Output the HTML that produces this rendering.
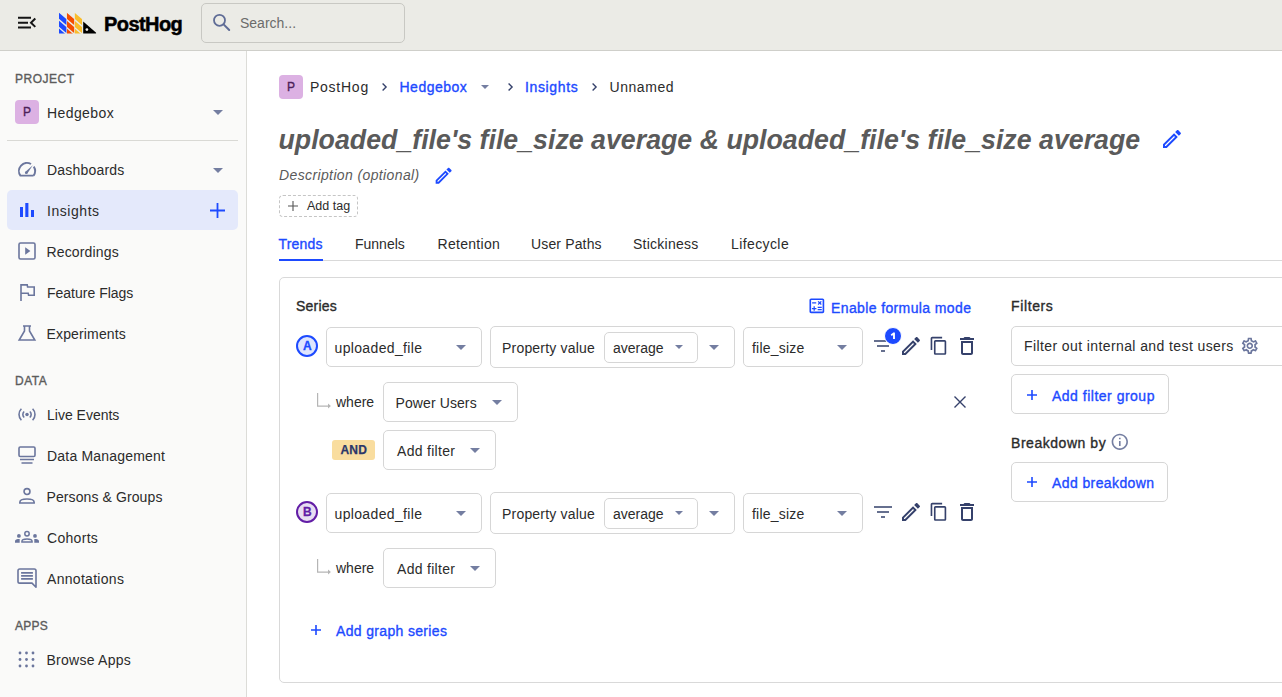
<!DOCTYPE html>
<html><head><meta charset="utf-8">
<style>
*{box-sizing:border-box;margin:0;padding:0}
html,body{width:1282px;height:697px;overflow:hidden;background:#fff;font-family:"Liberation Sans",sans-serif;color:#2b2b2b}
.a{position:absolute}
.t{position:absolute;white-space:nowrap;font-size:14px;line-height:14px}
#hdr{position:absolute;left:0;top:0;width:1282px;height:51px;background:#ebebe6;border-bottom:1px solid #cfcfca}
#side{position:absolute;left:0;top:51px;width:247px;height:646px;background:#fafaf9;border-right:1px solid #dcdcd8}
.sec{position:absolute;white-space:nowrap;font-size:12px;line-height:12px;color:#5c5c5c;-webkit-text-stroke:0.35px currentColor}
.box{position:absolute;border:1px solid #d6d6d6;border-radius:5px;background:#fff}
.blue{color:#1d4aff}
.b{font-weight:700}
.sb{-webkit-text-stroke:0.35px currentColor}
svg{position:absolute;overflow:visible}
.car{position:absolute;width:0;height:0;border-left:5px solid transparent;border-right:5px solid transparent;border-top:5px solid #747ea1}
.ic{fill:none;stroke:#6b769d;stroke-width:1.6}
.dk{fill:none;stroke:#35416b;stroke-width:1.8}
</style></head><body>

<!-- HEADER -->
<div id="hdr"></div>
<svg style="left:15px;top:11px" width="24" height="24" viewBox="0 0 24 24"><path d="M3 18h13v-2H3v2zm0-5h10v-2H3v2zm0-7v2h13V6H3zm18 9.59L17.42 12 21 8.41 19.59 7l-5 5 5 5L21 15.59z" fill="#151515" transform="translate(0 -0.1) scale(1 0.98)"/></svg>
<svg style="left:0;top:0" width="100" height="40" viewBox="0 0 100 40"><clipPath id="lc0"><rect x="59.0" y="12.8" width="7.6" height="20.8"/></clipPath><path clip-path="url(#lc0)" fill="#1d4aff" d="M59.00 12.80 L66.60 19.26 L66.60 25.26 L59.00 18.80Z M59.00 20.70 L66.60 27.16 L66.60 33.16 L59.00 26.70Z M59.00 28.60 L66.60 35.06 L66.60 41.06 L59.00 34.60Z M59.00 36.50 L66.60 42.96 L66.60 48.96 L59.00 42.50Z"/><clipPath id="lc1"><rect x="66.8" y="12.8" width="7.6" height="20.8"/></clipPath><path clip-path="url(#lc1)" fill="#f54e00" d="M66.80 12.80 L74.40 19.26 L74.40 25.26 L66.80 18.80Z M66.80 20.70 L74.40 27.16 L74.40 33.16 L66.80 26.70Z M66.80 28.60 L74.40 35.06 L74.40 41.06 L66.80 34.60Z M66.80 36.50 L74.40 42.96 L74.40 48.96 L66.80 42.50Z"/><clipPath id="lc2"><rect x="74.6" y="12.8" width="7.6" height="20.8"/></clipPath><path clip-path="url(#lc2)" fill="#f9bd2b" d="M74.60 12.80 L82.20 19.26 L82.20 25.26 L74.60 18.80Z M74.60 20.70 L82.20 27.16 L82.20 33.16 L74.60 26.70Z M74.60 28.60 L82.20 35.06 L82.20 41.06 L74.60 34.60Z M74.60 36.50 L82.20 42.96 L82.20 48.96 L74.60 42.50Z"/><path d="M83.2 21.6V33.6H95Q97 33.6 95.6 32.2Z" fill="#000"/><circle cx="86.9" cy="29.6" r="1.35" fill="#ebebe6"/></svg>
<div class="t b" style="left:104px;top:14px;font-size:20px;line-height:20px;color:#000;-webkit-text-stroke:0.5px #000;letter-spacing:-0.57px">PostHog</div>
<div class="a" style="left:201px;top:3px;width:204px;height:40px;border:1px solid #c8c8c3;border-radius:5px;background:#ebebe6"></div>
<svg style="left:208px;top:10px" width="28" height="26" viewBox="208 10 28 26"><circle cx="219.5" cy="20.3" r="5.5" fill="none" stroke="#5f6c96" stroke-width="1.8"/><path d="M223.6 24.4L229.2 30" stroke="#5f6c96" stroke-width="2" stroke-linecap="round"/></svg>
<div class="t" style="left:240px;top:16px;color:#6b6b6b">Search...</div>

<!-- SIDEBAR -->
<div id="side"></div>
<div class="sec" style="left:15px;top:73px;letter-spacing:0.52px">PROJECT</div>
<div class="a" style="left:15px;top:100px;width:24px;height:24px;border-radius:4px;background:#dcb1e3"></div>
<div class="t sb" style="left:23px;top:106px;font-size:12px;line-height:12px;color:#4d2159">P</div>
<div class="t" style="left:47px;top:106px;letter-spacing:0.4px">Hedgebox</div>
<div class="car" style="left:213px;top:110px"></div>
<div class="a" style="left:7px;top:140px;width:231px;height:1px;background:#d9d9d5"></div>

<div class="t" style="left:47px;top:163px;letter-spacing:0.2px">Dashboards</div>
<div class="car" style="left:213px;top:168px"></div>
<div class="a" style="left:7px;top:190px;width:231px;height:40px;border-radius:5px;background:#e4e9fb"></div>
<div class="t" style="left:47px;top:204px;letter-spacing:0.55px">Insights</div>
<svg style="left:210px;top:203px" width="15" height="15" viewBox="0 0 15 15"><path d="M7.5 0V15M0 7.5H15" stroke="#1d4aff" stroke-width="1.8"/></svg>
<div class="t" style="left:46.5px;top:245px;letter-spacing:0.15px">Recordings</div>
<div class="t" style="left:47px;top:286px">Feature Flags</div>
<div class="t" style="left:46.5px;top:327px;letter-spacing:0.15px">Experiments</div>
<div class="sec" style="left:15px;top:375px;letter-spacing:0.5px">DATA</div>
<div class="t" style="left:47px;top:408px">Live Events</div>
<div class="t" style="left:47px;top:449px;letter-spacing:0.2px">Data Management</div>
<div class="t" style="left:46.5px;top:490px;letter-spacing:0.1px">Persons &amp; Groups</div>
<div class="t" style="left:47px;top:531px;letter-spacing:0.3px">Cohorts</div>
<div class="t" style="left:47px;top:572px;letter-spacing:0.3px">Annotations</div>
<div class="sec" style="left:15px;top:620px;letter-spacing:0.25px">APPS</div>
<div class="t" style="left:46.5px;top:653px;letter-spacing:0.25px">Browse Apps</div>


<!-- sidebar icons -->
<svg style="left:18px;top:162px" width="18" height="15" viewBox="0 0 18 15"><path d="M15.57 13.65L2.43 13.65A8.05 8.05 0 0 1 13.03 2.03M15.75 4.61A8.05 8.05 0 0 1 15.57 13.65" fill="none" stroke="#6b769d" stroke-width="1.9" stroke-linejoin="round"/><path d="M9.18 11.66L7.22 9.94L14.8 3.3Z" fill="#6b769d"/><circle cx="8.2" cy="10.8" r="1.3" fill="#6b769d"/></svg>
<svg style="left:20px;top:203px" width="14" height="14" viewBox="0 0 14 14"><path d="M0 4H3V14H0ZM5.3 0H8.4V14H5.3ZM11 7H14V14H11Z" fill="#1d4aff"/></svg>
<svg style="left:18px;top:242px" width="18" height="18" viewBox="0 0 18 18"><rect x="1" y="1" width="16" height="16" rx="1.5" class="ic" stroke-width="2"/><path d="M7.2 5.3V12.7L12.4 9Z" fill="#6b769d"/></svg>
<svg style="left:20px;top:284px" width="16" height="17" viewBox="0 0 16 17"><path d="M1 17V0.9H7.2L7.6 3H14.2V11.2H8.6L8.2 9.2H1" class="ic" stroke-width="1.9"/></svg>
<svg style="left:18px;top:325px" width="18" height="16" viewBox="0 0 18 16"><path d="M5 1H13M6.5 1V6L1.2 15H16.8L11.5 6V1" class="ic" stroke-width="1.9" stroke-linejoin="miter"/></svg>
<svg style="left:18px;top:408px" width="19" height="13" viewBox="0 0 19 13"><circle cx="9" cy="6.5" r="1.75" fill="#6b769d"/><path d="M6.2 3.5A4 4 0 0 0 6.2 9.5M11.8 3.5A4 4 0 0 1 11.8 9.5M3.4 0.8A8 8 0 0 0 3.4 12.2M14.6 0.8A8 8 0 0 1 14.6 12.2" class="ic" stroke-width="1.8"/></svg>
<svg style="left:18px;top:446px" width="18" height="18" viewBox="0 0 18 18"><rect x="1" y="1" width="16" height="9.5" rx="1.2" class="ic" stroke-width="1.8"/><path d="M2 13.5H16M3.5 17H14.5" class="ic" stroke-width="1.8"/></svg>
<svg style="left:19px;top:489px" width="16" height="16" viewBox="0 0 16 16"><circle cx="8" cy="2.6" r="2.95" class="ic" stroke-width="1.7"/><path d="M0.85 14.05V13.2C0.85 11 4.5 10.05 8 10.05S15.15 11 15.15 13.2V14.05Z" class="ic" stroke-width="1.7"/></svg>
<svg style="left:15px;top:531px" width="24" height="12" viewBox="0 0 24 12"><circle cx="12" cy="2.7" r="2.2" fill="none" stroke="#6b769d" stroke-width="1.5"/><path d="M6.95 11V10.2C6.95 8.5 9.5 7.95 12 7.95S17.05 8.5 17.05 10.2V11Z" fill="none" stroke="#6b769d" stroke-width="1.5"/><circle cx="3.9" cy="4.9" r="1.9" fill="#6b769d"/><circle cx="20" cy="4.9" r="1.9" fill="#6b769d"/><path d="M0 11.7V10.4C0 9 1.3 8.1 3 8.1H4.7V11.7ZM24 11.7V10.4C24 9 22.7 8.1 21 8.1H19.3V11.7Z" fill="#6b769d"/></svg>
<svg style="left:17px;top:568px" width="20" height="20" viewBox="0 0 20 20"><path d="M2.7 1H17.3Q19 1 19 2.7V19.2L15 15.1H2.7Q1 15.1 1 13.4V2.7Q1 1 2.7 1Z" class="ic" stroke-width="1.8" stroke-linejoin="round"/><path d="M4.1 4.9H15.9M4.1 7.9H15.9M4.1 10.9H15.9" class="ic" stroke-width="1.7"/></svg>
<svg style="left:18px;top:651px" width="17" height="17" viewBox="0 0 17 17"><g fill="#6b769d"><circle cx="2" cy="2" r="1.4"/><circle cx="8.5" cy="2" r="1.4"/><circle cx="15" cy="2" r="1.4"/><circle cx="2" cy="8.5" r="1.4"/><circle cx="8.5" cy="8.5" r="1.4"/><circle cx="15" cy="8.5" r="1.4"/><circle cx="2" cy="15" r="1.4"/><circle cx="8.5" cy="15" r="1.4"/><circle cx="15" cy="15" r="1.4"/></g></svg>

<!-- MAIN -->
<div class="a" style="left:279px;top:75px;width:24px;height:24px;border-radius:4px;background:#dcb1e3"></div>
<div class="t sb" style="left:287px;top:81px;font-size:12px;line-height:12px;color:#4d2159">P</div>
<div class="t" style="left:310px;top:80px;letter-spacing:0.75px">PostHog</div>
<svg style="left:382px;top:83px" width="5" height="8" viewBox="0 0 5 8"><path d="M0.6 0.5L4.1 4L0.6 7.5" fill="none" stroke="#35416b" stroke-width="1.4"/></svg>
<div class="t blue sb" style="left:399.5px;top:80px;letter-spacing:0.49px">Hedgebox</div>
<div class="car" style="left:481px;top:85px;border-left-width:4px;border-right-width:4px;border-top-width:4px"></div>
<svg style="left:508px;top:83px" width="5" height="8" viewBox="0 0 5 8"><path d="M0.6 0.5L4.1 4L0.6 7.5" fill="none" stroke="#35416b" stroke-width="1.4"/></svg>
<div class="t blue sb" style="left:525px;top:80px;letter-spacing:0.64px">Insights</div>
<svg style="left:592px;top:83px" width="5" height="8" viewBox="0 0 5 8"><path d="M0.6 0.5L4.1 4L0.6 7.5" fill="none" stroke="#35416b" stroke-width="1.4"/></svg>
<div class="t" style="left:609.5px;top:80px;letter-spacing:0.55px">Unnamed</div>

<div class="t b" style="left:278.5px;top:127px;font-size:26.75px;line-height:27px;font-style:italic;color:#5a5a5a">uploaded_file's file_size average &amp; uploaded_file's file_size average</div>
<div class="t" style="left:279px;top:168px;font-style:italic;color:#5a5a5a;letter-spacing:0.38px">Description (optional)</div>
<svg style="left:1160px;top:127px" width="24" height="24" viewBox="0 0 24 24"><path d="M3 17.25V21h3.75L17.81 9.94l-3.75-3.75L3 17.25zM5.92 19H5v-.92l9.06-9.06.92.92L5.92 19zM20.71 5.63l-2.34-2.34c-.39-.39-1.02-.39-1.41 0l-1.83 1.83 3.75 3.75 1.83-1.83c.39-.39.39-1.02 0-1.41z" fill="#1d4aff"/></svg>
<svg style="left:432.5px;top:165px" width="21.3" height="21.3" viewBox="0 0 24 24"><path d="M3 17.25V21h3.75L17.81 9.94l-3.75-3.75L3 17.25zM5.92 19H5v-.92l9.06-9.06.92.92L5.92 19zM20.71 5.63l-2.34-2.34c-.39-.39-1.02-.39-1.41 0l-1.83 1.83 3.75 3.75 1.83-1.83c.39-.39.39-1.02 0-1.41z" fill="#1d4aff"/></svg>
<div class="a" style="left:279px;top:195px;width:79px;height:22px;border:1px dashed #c5c5c5;border-radius:4px"></div>
<svg style="left:288px;top:201px" width="10" height="10" viewBox="0 0 10 10"><path d="M5 0V10M0 5H10" stroke="#555" stroke-width="1.1"/></svg>
<div class="t" style="left:307px;top:200px;font-size:12.5px;line-height:13px">Add tag</div>

<!-- tabs -->
<div class="a" style="left:279px;top:260px;width:1003px;height:1px;background:#d9d9d9"></div>
<div class="a" style="left:279px;top:259px;width:44px;height:2px;background:#1d4aff"></div>
<div class="t blue sb" style="left:278.5px;top:237px;letter-spacing:0.2px">Trends</div>
<div class="t" style="left:355px;top:237px">Funnels</div>
<div class="t" style="left:437.5px;top:237px;letter-spacing:0.3px">Retention</div>
<div class="t" style="left:531px;top:237px;letter-spacing:0.15px">User Paths</div>
<div class="t" style="left:633px;top:237px;letter-spacing:0.25px">Stickiness</div>
<div class="t" style="left:731px;top:237px;letter-spacing:0.4px">Lifecycle</div>

<!-- card -->
<div class="a" style="left:279px;top:277px;width:1020px;height:406px;border:1px solid #d9d9d9;border-radius:5px"></div>
<div class="t sb" style="left:296px;top:299px;letter-spacing:0.2px">Series</div>
<svg style="left:806.9px;top:296.1px" width="19.7" height="19.7" viewBox="0 0 24 24"><path d="M19 3H5c-1.1 0-2 .9-2 2v14c0 1.1.9 2 2 2h14c1.1 0 2-.9 2-2V5c0-1.1-.9-2-2-2zm0 16H5V5h14v14zM6.25 7.72h5v1.5h-5zM13 15.75h5v1.5h-5zM13 13.25h5v1.5h-5zM8 18h1.5v-2h2v-1.5h-2v-2H8v2H6v1.5h2zM14.09 10.95l1.41-1.41 1.41 1.41 1.06-1.06-1.41-1.42 1.41-1.41L16.91 6 15.5 7.41 14.090 6l-1.06 1.06 1.41 1.41-1.41 1.42z" fill="#1d4aff"/></svg>
<div class="t sb blue" style="left:831px;top:301px;letter-spacing:0.38px">Enable formula mode</div>

<!-- series A -->
<div class="a" style="left:296px;top:335px;width:22px;height:22px;border-radius:50%;border:2px solid #1d4aff;background:#dfe5fe"></div>
<div class="t b" style="left:303px;top:340px;font-size:12px;line-height:12px;color:#1d4aff;-webkit-text-stroke:0.3px #1d4aff">A</div>
<div class="box" style="left:326px;top:327px;width:156px;height:40px"></div>
<div class="t" style="left:334.5px;top:341px;letter-spacing:0.35px">uploaded_file</div>
<div class="car" style="left:456px;top:345px"></div>
<div class="box" style="left:490px;top:326px;width:245px;height:42px"></div>
<div class="t" style="left:502px;top:341px;letter-spacing:0.2px">Property value</div>
<div class="box" style="left:604px;top:332px;width:94px;height:31px"></div>
<div class="t" style="left:613px;top:341px">average</div>
<div class="car" style="left:675px;top:345px;border-left-width:4px;border-right-width:4px;border-top-width:4px"></div>
<div class="car" style="left:709px;top:345px"></div>
<div class="box" style="left:743px;top:327px;width:120px;height:40px"></div>
<div class="t" style="left:752px;top:341px;letter-spacing:0.2px">file_size</div>
<div class="car" style="left:837px;top:345px"></div>
<svg style="left:871px;top:334px" width="24" height="24" viewBox="0 0 24 24"><path d="M3 7H21M6 12H18M10 17H14" stroke="#35416b" stroke-width="1.6"/></svg>
<div class="a" style="left:884px;top:327px;width:18px;height:18px;border-radius:50%;background:#1d4aff;border:1px solid #fff"></div>
<svg style="left:0;top:0" width="1" height="1"><path d="M891.2 335.2L894 333.3V339" fill="none" stroke="#fff" stroke-width="1.9" stroke-linejoin="round"/></svg>
<svg style="left:899px;top:334px" width="24" height="24" viewBox="0 0 24 24"><path d="M3 17.25V21h3.75L17.81 9.94l-3.75-3.75L3 17.25zM5.92 19H5v-.92l9.06-9.06.92.92L5.92 19zM20.71 5.63l-2.34-2.34c-.39-.39-1.02-.39-1.41 0l-1.83 1.83 3.75 3.75 1.83-1.83c.39-.39.39-1.02 0-1.41z" fill="#35416b"/></svg>
<svg style="left:929.3px;top:336.2px" width="19.7" height="19.7" viewBox="0 0 24 24"><path d="M16 1H4c-1.1 0-2 .9-2 2v14h2V3h12V1zm3 4H8c-1.1 0-2 .9-2 2v14c0 1.1.9 2 2 2h11c1.1 0 2-.9 2-2V7c0-1.1-.9-2-2-2zm0 16H8V7h11v14z" fill="#35416b"/></svg>
<svg style="left:955px;top:334px" width="24" height="24" viewBox="0 0 24 24"><path d="M6 19c0 1.1.9 2 2 2h8c1.1 0 2-.9 2-2V7H6v12zM8 9h8v10H8V9zm7.5-5l-1-1h-5l-1 1H5v2h14V4z" fill="#35416b"/></svg>

<svg style="left:317px;top:393px" width="14" height="16" viewBox="0 0 14 16"><path d="M0.6 0V13.1H11.5" fill="none" stroke="#b5b5b5" stroke-width="1.2"/><path d="M11 10.6L13.9 13.1L11 15.6Z" fill="#b5b5b5"/></svg>
<div class="t" style="left:336px;top:395px">where</div>
<div class="box" style="left:383px;top:382px;width:135px;height:40px"></div>
<div class="t" style="left:395.5px;top:396px;letter-spacing:0.1px">Power Users</div>
<div class="car" style="left:492px;top:400px"></div>
<svg style="left:954px;top:396px" width="12" height="12" viewBox="0 0 12 12"><path d="M0.5 0.5L11.5 11.5M11.5 0.5L0.5 11.5" stroke="#35416b" stroke-width="1.4"/></svg>
<div class="a" style="left:332px;top:440px;width:43px;height:20px;border-radius:3px;background:#f9dd9f"></div>
<div class="t b" style="left:340.5px;top:444px;font-size:12px;line-height:12px;color:#2b3769;-webkit-text-stroke:0.25px #2b3769;letter-spacing:0.2px">AND</div>
<div class="box" style="left:383px;top:430px;width:113px;height:40px"></div>
<div class="t" style="left:397px;top:444px;letter-spacing:0.3px">Add filter</div>
<div class="car" style="left:470px;top:448px"></div>

<!-- series B -->
<div class="a" style="left:296px;top:501px;width:22px;height:22px;border-radius:50%;border:2px solid #621da6;background:#e8ddf2"></div>
<div class="t b" style="left:303px;top:506px;font-size:12px;line-height:12px;color:#621da6;-webkit-text-stroke:0.3px #621da6">B</div>
<div class="box" style="left:326px;top:493px;width:156px;height:40px"></div>
<div class="t" style="left:334.5px;top:507px;letter-spacing:0.35px">uploaded_file</div>
<div class="car" style="left:456px;top:511px"></div>
<div class="box" style="left:490px;top:492px;width:245px;height:42px"></div>
<div class="t" style="left:502px;top:507px;letter-spacing:0.2px">Property value</div>
<div class="box" style="left:604px;top:498px;width:94px;height:31px"></div>
<div class="t" style="left:613px;top:507px">average</div>
<div class="car" style="left:675px;top:511px;border-left-width:4px;border-right-width:4px;border-top-width:4px"></div>
<div class="car" style="left:709px;top:511px"></div>
<div class="box" style="left:743px;top:493px;width:120px;height:40px"></div>
<div class="t" style="left:752px;top:507px;letter-spacing:0.2px">file_size</div>
<div class="car" style="left:837px;top:511px"></div>
<svg style="left:871px;top:500px" width="24" height="24" viewBox="0 0 24 24"><path d="M3 7H21M6 12H18M10 17H14" stroke="#35416b" stroke-width="1.6"/></svg>
<svg style="left:899px;top:500px" width="24" height="24" viewBox="0 0 24 24"><path d="M3 17.25V21h3.75L17.81 9.94l-3.75-3.75L3 17.25zM5.92 19H5v-.92l9.06-9.06.92.92L5.92 19zM20.71 5.63l-2.34-2.34c-.39-.39-1.02-.39-1.41 0l-1.83 1.83 3.75 3.75 1.83-1.83c.39-.39.39-1.02 0-1.41z" fill="#35416b"/></svg>
<svg style="left:929.3px;top:502.2px" width="19.7" height="19.7" viewBox="0 0 24 24"><path d="M16 1H4c-1.1 0-2 .9-2 2v14h2V3h12V1zm3 4H8c-1.1 0-2 .9-2 2v14c0 1.1.9 2 2 2h11c1.1 0 2-.9 2-2V7c0-1.1-.9-2-2-2zm0 16H8V7h11v14z" fill="#35416b"/></svg>
<svg style="left:955px;top:500px" width="24" height="24" viewBox="0 0 24 24"><path d="M6 19c0 1.1.9 2 2 2h8c1.1 0 2-.9 2-2V7H6v12zM8 9h8v10H8V9zm7.5-5l-1-1h-5l-1 1H5v2h14V4z" fill="#35416b"/></svg>

<svg style="left:317px;top:559px" width="14" height="16" viewBox="0 0 14 16"><path d="M0.6 0V13.1H11.5" fill="none" stroke="#b5b5b5" stroke-width="1.2"/><path d="M11 10.6L13.9 13.1L11 15.6Z" fill="#b5b5b5"/></svg>
<div class="t" style="left:336px;top:561px">where</div>
<div class="box" style="left:383px;top:548px;width:113px;height:40px"></div>
<div class="t" style="left:397px;top:562px;letter-spacing:0.3px">Add filter</div>
<div class="car" style="left:470px;top:566px"></div>

<svg style="left:311px;top:625px" width="10" height="10" viewBox="0 0 10 10"><path d="M5 0V10M0 5H10" stroke="#1d4aff" stroke-width="1.6"/></svg>
<div class="t sb blue" style="left:336px;top:624px;letter-spacing:0.34px">Add graph series</div>

<!-- filters panel -->
<div class="t sb" style="left:1011px;top:299px;letter-spacing:0.62px">Filters</div>
<div class="box" style="left:1011px;top:326px;width:300px;height:40px"></div>
<div class="t" style="left:1024px;top:339px;letter-spacing:0.4px">Filter out internal and test users</div>
<svg style="left:1239.8px;top:336.4px" width="19.6" height="19.6" viewBox="0 0 24 24"><path d="M19.43 12.98c.04-.32.07-.64.07-.98 0-.34-.03-.66-.07-.98l2.11-1.65c.19-.15.24-.42.12-.64l-2-3.46c-.09-.16-.26-.25-.44-.25-.06 0-.12.01-.17.03l-2.49 1c-.52-.4-1.08-.73-1.69-.98l-.38-2.65C14.460 2.18 14.25 2 14 2h-4c-.25 0-.46.18-.49.42l-.38 2.65c-.61.25-1.17.59-1.690.98l-2.49-1c-.06-.02-.12-.03-.18-.03-.17 0-.34.09-.43.25l-2 3.46c-.13.22-.07.49.12.64l2.11 1.65c-.04.32-.07.65-.07.98 0 .33.03.66.07.98l-2.11 1.65c-.19.15-.24.42-.12.64l2 3.46c.09.16.26.25.44.25.06 0 .12-.01.17-.03l2.49-1c.52.4 1.08.73 1.69.98l.38 2.65c.03.24.24.42.49.42h4c.25 0 .46-.18.49-.42l.38-2.65c.61-.25 1.17-.59 1.69-.98l2.49 1c.06.02.12.03.18.03.17 0 .34-.09.43-.25l2-3.46c.12-.22.07-.49-.12-.64l-2.11-1.65zm-1.98-1.71c.04.31.05.52.05.73 0 .21-.02.43-.05.73l-.14 1.13.89.7 1.08.84-.7 1.21-1.27-.51-1.04-.42-.9.68c-.43.32-.84.56-1.25.73l-1.06.43-.16 1.13-.2 1.35h-1.4l-.19-1.35-.16-1.13-1.06-.43c-.43-.18-.83-.41-1.23-.71l-.91-.7-1.06.43-1.27.51-.7-1.21 1.08-.84.89-.7-.14-1.13c-.03-.31-.05-.54-.05-.74s.02-.43.05-.73l.14-1.13-.89-.7-1.08-.84.7-1.21 1.27.51 1.04.42.9-.68c.43-.32.84-.56 1.25-.73l1.06-.43.16-1.13.2-1.35h1.39l.19 1.35.16 1.13 1.06.43c.43.18.83.41 1.23.71l.91.7 1.06-.43 1.270-.51.7 1.21-1.07.85-.89.7.14 1.13zM12 8c-2.21 0-4 1.79-4 4s1.79 4 4 4 4-1.79 4-4-1.79-4-4-4zm0 6c-1.1 0-2-.9-2-2s.9-2 2-2 2 .9 2 2-.9 2-2 2z" fill="#6b769d"/></svg>
<div class="box" style="left:1011px;top:374px;width:158px;height:40px"></div>
<svg style="left:1027px;top:390px" width="10" height="10" viewBox="0 0 10 10"><path d="M5 0V10M0 5H10" stroke="#1d4aff" stroke-width="1.6"/></svg>
<div class="t sb blue" style="left:1052px;top:389px;letter-spacing:0.5px">Add filter group</div>
<div class="t sb" style="left:1011px;top:436px;letter-spacing:0.54px">Breakdown by</div>
<svg style="left:1110.1px;top:432.3px" width="19.6" height="19.6" viewBox="0 0 24 24"><path d="M11 7h2v2h-2zm0 4h2v6h-2zm1-9C6.48 2 2 6.48 2 12s4.48 10 10 10 10-4.48 10-10S17.52 2 12 2zm0 18c-4.41 0-8-3.59-8-8s3.59-8 8-8 8 3.59 8 8-3.59 8-8 8z" fill="#747ea1"/></svg>
<div class="box" style="left:1011px;top:462px;width:157px;height:40px"></div>
<svg style="left:1027px;top:477px" width="10" height="10" viewBox="0 0 10 10"><path d="M5 0V10M0 5H10" stroke="#1d4aff" stroke-width="1.6"/></svg>
<div class="t sb blue" style="left:1052px;top:476px;letter-spacing:0.4px">Add breakdown</div>

</body></html>
